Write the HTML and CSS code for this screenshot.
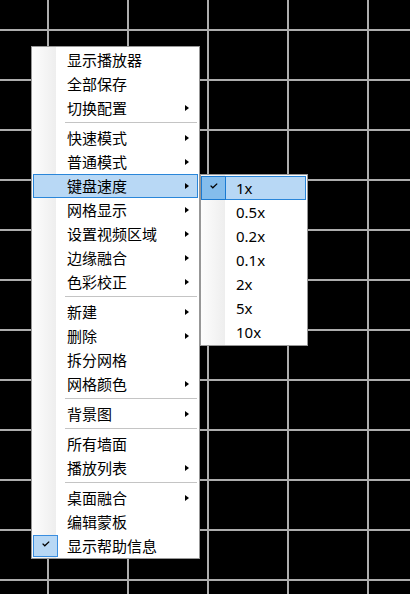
FILE: index.html
```html
<!DOCTYPE html>
<html lang="zh-CN">
<head>
<meta charset="utf-8">
<title>菜单</title>
<link rel="stylesheet" href="styles.css">
</head>
<body>
<div class="canvas">
  <div class="menu main">
    <div class="item"><span class="chk"></span><span class="label">显示播放器</span></div>
    <div class="item"><span class="chk"></span><span class="label">全部保存</span></div>
    <div class="item"><span class="chk"></span><span class="label">切换配置</span><span class="arrow"></span></div>
    <div class="sep"></div>
    <div class="item"><span class="chk"></span><span class="label">快速模式</span><span class="arrow"></span></div>
    <div class="item"><span class="chk"></span><span class="label">普通模式</span><span class="arrow"></span></div>
    <div class="item active"><span class="chk"></span><span class="label">键盘速度</span><span class="arrow"></span></div>
    <div class="item"><span class="chk"></span><span class="label">网格显示</span><span class="arrow"></span></div>
    <div class="item"><span class="chk"></span><span class="label">设置视频区域</span><span class="arrow"></span></div>
    <div class="item"><span class="chk"></span><span class="label">边缘融合</span><span class="arrow"></span></div>
    <div class="item"><span class="chk"></span><span class="label">色彩校正</span><span class="arrow"></span></div>
    <div class="sep"></div>
    <div class="item"><span class="chk"></span><span class="label">新建</span><span class="arrow"></span></div>
    <div class="item"><span class="chk"></span><span class="label">删除</span><span class="arrow"></span></div>
    <div class="item"><span class="chk"></span><span class="label">拆分网格</span></div>
    <div class="item"><span class="chk"></span><span class="label">网格颜色</span><span class="arrow"></span></div>
    <div class="sep"></div>
    <div class="item"><span class="chk"></span><span class="label">背景图</span><span class="arrow"></span></div>
    <div class="sep"></div>
    <div class="item"><span class="chk"></span><span class="label">所有墙面</span></div>
    <div class="item"><span class="chk"></span><span class="label">播放列表</span><span class="arrow"></span></div>
    <div class="sep"></div>
    <div class="item"><span class="chk"></span><span class="label">桌面融合</span><span class="arrow"></span></div>
    <div class="item"><span class="chk"></span><span class="label">编辑蒙板</span></div>
    <div class="item"><span class="chk on"><svg width="8" height="6" viewBox="0 0 8 6"><path d="M0.6 2.6 L2.8 4.8 L7.2 0.6" fill="none" stroke="#000" stroke-width="1.3"/></svg></span><span class="label">显示帮助信息</span></div>
  </div>
  <div class="menu sub">
    <div class="item active"><span class="chk on"><svg width="8" height="6" viewBox="0 0 8 6"><path d="M0.6 2.6 L2.8 4.8 L7.2 0.6" fill="none" stroke="#000" stroke-width="1.3"/></svg></span><span class="label">1x</span></div>
    <div class="item"><span class="chk"></span><span class="label">0.5x</span></div>
    <div class="item"><span class="chk"></span><span class="label">0.2x</span></div>
    <div class="item"><span class="chk"></span><span class="label">0.1x</span></div>
    <div class="item"><span class="chk"></span><span class="label">2x</span></div>
    <div class="item"><span class="chk"></span><span class="label">5x</span></div>
    <div class="item"><span class="chk"></span><span class="label">10x</span></div>
  </div>
</div>
</body>
</html>
```

FILE: styles.css
```css
html, body {
  margin: 0;
  padding: 0;
}
body {
  width: 410px;
  height: 594px;
  overflow: hidden;
  background: #000;
  font-family: "Noto Sans", "Noto Sans CJK SC", sans-serif;
  font-size: 15px;
  color: #000;
}
.canvas {
  position: relative;
  width: 410px;
  height: 594px;
  background-color: #000;
  background-image:
    linear-gradient(to right, transparent 47px, #adadad 47px, #adadad 49px, transparent 49px),
    linear-gradient(to bottom, transparent 29px, #adadad 29px, #adadad 31px, transparent 31px);
  background-size: 80px 100%, 100% 50px;
}
.menu {
  position: absolute;
  box-sizing: border-box;
  border: 1px solid #979797;
  background: linear-gradient(to right, #fdfdfd 0, #eeeeee 24px, #ffffff 24px);
  display: flex;
  flex-direction: column;
}
.main {
  left: 31px;
  top: 46px;
  width: 169px;
  padding: 1px 1px 0 1px;
}
.sub {
  left: 200px;
  top: 174px;
  width: 108px;
  padding: 1px 1px 1px 0;
}
.item {
  box-sizing: border-box;
  height: 24px;
  border: 1px solid transparent;
  display: flex;
  align-items: center;
  white-space: nowrap;
}
.main .item {
  margin-left: 0;
}
.item.active {
  background: #b8d8f5;
  border-color: #2a86d9;
}
.chk {
  flex: none;
  box-sizing: border-box;
  width: 25px;
  height: 22px;
  margin-left: -1px;
  display: flex;
  align-items: center;
  justify-content: center;
}
.chk svg {
  display: block;
  margin-bottom: 4px;
}
.main .chk.on {
  background: #b8d8f5;
  border: 1px solid #3a8ee0;
}
.sub .chk {
  height: 24px;
  margin: -1px 0 -1px -1px;
}
.sub .chk.on {
  background: #84bdec;
  border: 1px solid #1a7ad2;
}
.label {
  margin-left: 9px;
  line-height: 22px;
}
.sub .label {
  margin-left: 10px;
}
.arrow {
  flex: none;
  margin-left: auto;
  margin-right: 8px;
  width: 0;
  height: 0;
  border-left: 4px solid #000;
  border-top: 3.5px solid transparent;
  border-bottom: 3.5px solid transparent;
}
.sep {
  flex: none;
  height: 6px;
  box-sizing: border-box;
  padding-top: 2px;
}
.sep::before {
  content: "";
  display: block;
  height: 1px;
  margin-left: 32px;
  margin-right: 1px;
  background: #c4c4c4;
}
```
